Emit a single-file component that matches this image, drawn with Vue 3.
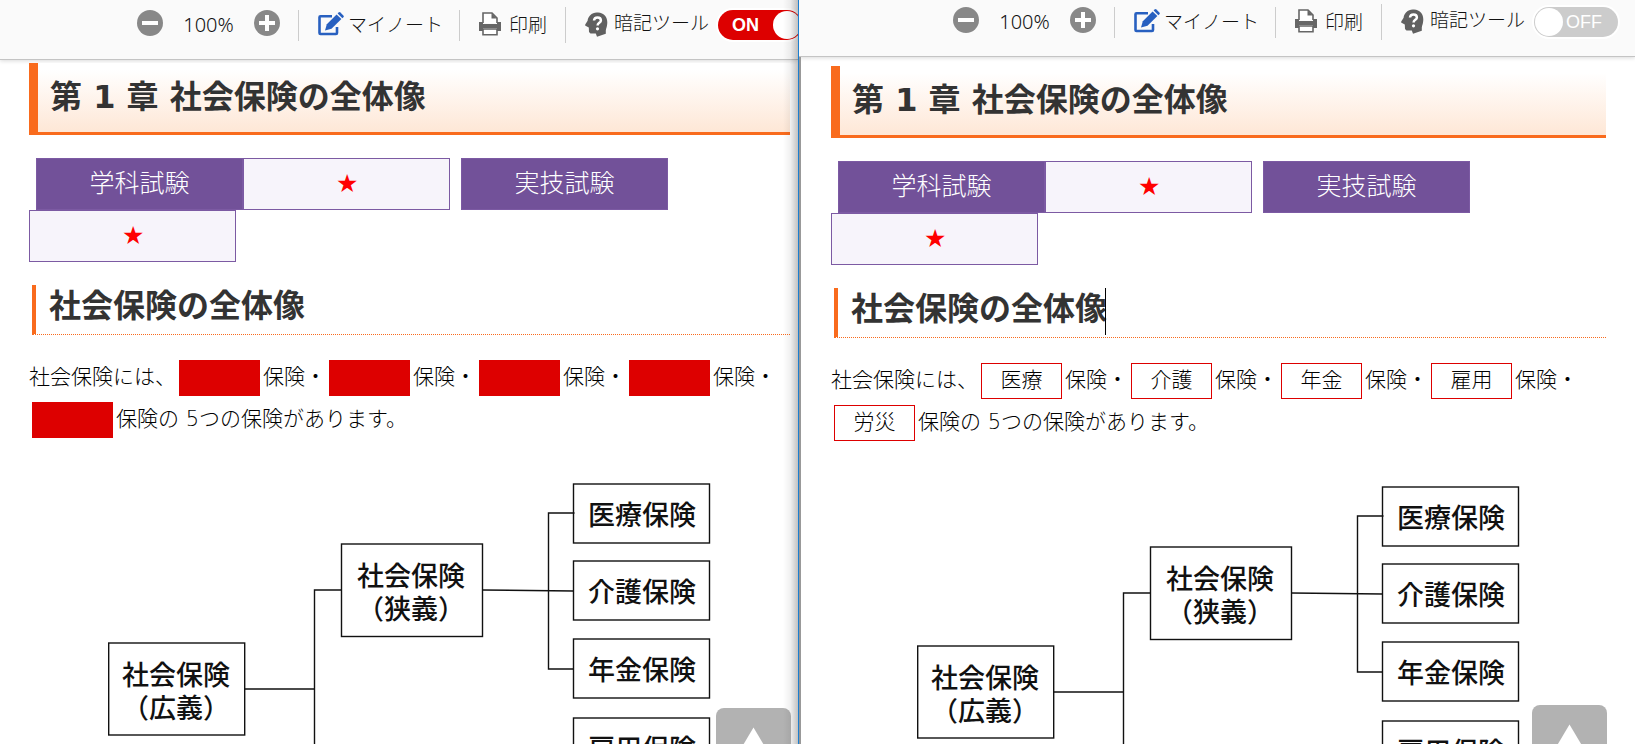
<script setup>
import { ref } from 'vue'

const panes = ref([
  { id: 'left', hidden: true },
  { id: 'right', hidden: false },
])
const answers = ['医療', '介護', '年金', '雇用']
const branches = [
  { name: '医療保険', y: 3 },
  { name: '介護保険', y: 80 },
  { name: '年金保険', y: 158 },
  { name: '雇用保険', y: 237 },
]
</script>

<template>
  <main class="screen">
    <section v-for="pane in panes" :key="pane.id" class="pane" :class="pane.id">
      <header class="toolbar">
        <button class="zoom-btn" type="button" aria-label="縮小">
          <svg width="26" height="26" viewBox="0 0 26 26"><circle cx="13" cy="13" r="13" fill="#888" /><path d="M5 11h16v4H5z" fill="#fff" /></svg>
        </button>
        <span class="zoom-value">100%</span>
        <button class="zoom-btn" type="button" aria-label="拡大">
          <svg width="26" height="26" viewBox="0 0 26 26"><circle cx="13" cy="13" r="13" fill="#888" /><path d="M5 11h6V5h4v6h6v4h-6v6h-4v-6H5z" fill="#fff" /></svg>
        </button>
        <a class="tool note" href="#note">
          <svg width="26" height="24" viewBox="0 0 26 24">
            <path d="M14 4.300H2.500a1 1 0 0 0-1 1V21a1 1 0 0 0 1 1H18a1 1 0 0 0 1-1v-6" fill="none" stroke="#2860c0" stroke-width="2.600" />
            <path d="M7 18.500l1.800-6.300L18.600 2.400l4.800 4.700-9.900 9.700z" fill="#2860c0" />
            <path d="M19.600 1.500l1-1q.9-.8 1.800 0l3 3q.8.900 0 1.800l-1 1z" fill="#2860c0" />
          </svg>
          <span>マイノート</span>
        </a>
        <button class="tool print" type="button">
          <svg width="22" height="24" viewBox="0 0 22 24">
            <path d="M0 10h4v3h14v-3h4v9h-4v-3H4v3H0z" fill="#666" />
            <path d="M4 11V1h9l5 5v5" fill="#fff" stroke="#666" stroke-width="1.600" />
            <path d="M12.500 1v5.500H18z" fill="#666" />
            <path d="M2 12h18v4H2z" fill="#666" />
            <path d="M4 17h14v5.800H4z" fill="#fff" stroke="#666" stroke-width="1.600" />
          </svg>
          <span>印刷</span>
        </button>
        <div class="tool memo">
          <svg width="23" height="25" viewBox="0 0 23 25">
            <path d="M5 3.500C7.500 1 10 .3 13 .6c2.800 0 5.500 1.200 7.300 3.400 1.700 2.300 2.200 5 1.900 8-.2 3-1.200 4.500-1.400 6.500v3.200L12 24.800l-1.200-3.300H5.500L4 20l-.2-4.500-3.300-1.700q-.7-.6-.1-1.500l2.200-3.500C2.800 6.700 3.500 5 5 3.500z" fill="#606060" />
            <path d="M9 8.500C9.200 6.300 10.500 5.400 12.500 5.400s3.400 1.200 3.400 3c0 2.400-3.300 2.500-3.300 5" fill="none" stroke="#fff" stroke-width="2.500" />
            <circle cx="12.500" cy="16.800" r="1.600" fill="#fff" />
          </svg>
          <label :for="'switch-' + pane.id">暗記ツール</label>
        </div>
        <button
          :id="'switch-' + pane.id"
          class="switch"
          :class="{ on: pane.hidden }"
          type="button"
          role="switch"
          :aria-checked="pane.hidden"
          @click="pane.hidden = !pane.hidden"
        >
          <span class="knob"></span><span class="state">{{ pane.hidden ? 'ON' : 'OFF' }}</span>
        </button>
      </header>

      <article class="content">
        <h1>第 1 章 社会保険の全体像</h1>
        <div class="exams">
          <span class="exam">学科試験</span><span class="rank">★</span>
          <span class="exam">実技試験</span><span class="rank">★</span>
        </div>
        <h2>社会保険の全体像<span v-if="pane.id === 'right'" class="caret"></span></h2>
        <p>社会保険には、<template v-for="word in answers" :key="word"><span class="blank" :class="{ masked: pane.hidden }">{{ pane.hidden ? '' : word }}</span>保険・</template><span class="blank" :class="{ masked: pane.hidden }">{{ pane.hidden ? '' : '労災' }}</span>保険の 5つの保険があります。</p>
        <svg class="diagram" width="603" height="310" viewBox="0 0 603 310" role="img" aria-label="社会保険の体系図">
          <g fill="none" stroke="#111" stroke-width="1.400">
            <rect x="0.700" y="162" width="136" height="92" />
            <rect x="233.500" y="63" width="141" height="92.500" />
            <path d="M136.500 208H206.500M206.500 310V109H233.500M374.500 109L465.500 110M466.500 32H440.500V188H465.500" />
            <rect v-for="b in branches" :key="b.name" x="465.500" :y="b.y" width="136" height="59" />
          </g>
          <g class="names">
            <text x="68" y="204">社会保険</text>
            <text x="68" y="237">（広義）</text>
            <text x="303" y="105">社会保険</text>
            <text x="303" y="138">（狭義）</text>
            <text v-for="b in branches" :key="b.name" x="534" :y="b.y + 41">{{ b.name }}</text>
          </g>
        </svg>
      </article>

      <button class="to-top" type="button" aria-label="ページの先頭へ">
        <svg width="75" height="75" viewBox="0 0 75 75"><path d="M37.500 19.500L58 54H17z" fill="#fff" /></svg>
      </button>
    </section>
  </main>
</template>

<style>
body {
  margin: 0;
  overflow: hidden;
}
</style>

<style scoped>
.screen {
  display: grid;
  grid-template-columns: 799fr 836fr;
  height: 100vh;
  overflow: hidden;
  background: #fff;
  color: #000;
  font-family: "Noto Sans", "Noto Sans CJK JP", sans-serif;
  font-weight: 300;
}
.pane {
  position: relative;
  min-width: 0;
  overflow: hidden;
  display: flex;
  flex-direction: column;
}
.left {
  border-right: 1px solid #1c7fd0;
}
.left::after {
  content: "";
  position: absolute;
  top: 0;
  right: 0;
  bottom: 0;
  width: 15px;
  background: linear-gradient(to right, rgba(0, 0, 0, 0), rgba(0, 0, 0, 0.06) 50%, rgba(0, 0, 0, 0.24));
  pointer-events: none;
}
button {
  border: 0;
  padding: 0;
  background: none;
  color: inherit;
  font: inherit;
  cursor: pointer;
}
svg {
  display: block;
  flex: none;
}
.toolbar {
  display: flex;
  align-items: flex-start;
  flex: none;
  box-sizing: border-box;
  height: 60px;
  padding: 10px 0 0 137px;
  border-bottom: 1px solid #c4c4c4;
  background: #fafafa;
  box-shadow: 0 1px 4px rgba(0, 0, 0, 0.15);
  font-size: 19px;
  line-height: 30px;
  color: #111;
}
.right .toolbar {
  height: 57px;
  padding: 7px 0 0 154px;
}
.toolbar > * {
  flex: none;
}
.zoom-value {
  width: 91px;
  text-align: center;
  font-size: 20px;
}
.tool {
  display: flex;
  align-items: flex-start;
  box-sizing: border-box;
  height: 31px;
  border-left: 1px solid #ccc;
  color: inherit;
  text-decoration: none;
}
.tool svg {
  margin-top: 2px;
}
.note {
  width: 161px;
  margin-left: 18px;
  padding-left: 19px;
  gap: 4px;
}
.print {
  width: 106px;
  padding-left: 19px;
  gap: 8px;
}
.memo {
  width: 152px;
  height: 36px;
  margin-top: -3px;
  padding-left: 19px;
  gap: 6px;
}
.memo svg {
  margin-top: 5px;
}
.memo label {
  line-height: 32px;
}
.switch {
  position: relative;
  width: 84px;
  height: 30px;
  margin-left: 1px;
  border-radius: 15px;
  background: #ccc;
  box-shadow: 0 0 0 2px #fff;
  color: #fff;
  font-family: "Liberation Sans", Arial, sans-serif;
  font-size: 18px;
  font-weight: 400;
  line-height: 31px;
  text-align: left;
}
.state {
  padding-left: 32px;
}
.knob {
  position: absolute;
  top: 1px;
  left: 1px;
  width: 28px;
  height: 28px;
  border-radius: 50%;
  background: #fff;
}
.switch.on {
  background: #d00;
}
.on .knob {
  left: 55px;
}
.on .state {
  padding-left: 14px;
  font-weight: 700;
}
.content {
  flex: 1;
  padding: 3px 8px 0 29px;
}
.right .content {
  padding: 9px 29px 0 30px;
  border-left: 2px solid #999;
}
h1,
h2 {
  margin: 0;
  color: #333;
  font-family: "DejaVu Sans", "Noto Sans CJK JP", sans-serif;
  font-size: 32px;
  font-weight: 700;
}
h1 {
  padding-left: 12px;
  border-left: 9px solid #f96b1d;
  border-bottom: 3px solid #f96b1d;
  background: linear-gradient(#fff 10%, #fee7d6);
  line-height: 69px;
}
.exams {
  display: flex;
  flex-wrap: wrap;
  margin-top: 23px;
}
.exam,
.rank {
  box-sizing: border-box;
  width: 207px;
  height: 52px;
  border: 1px solid #7c5aa3;
  font-size: 25px;
  text-align: center;
}
.exam {
  margin-left: 7px;
  background: #725199;
  color: #fff;
  line-height: 46px;
}
.rank {
  margin-right: 4px;
  background: #f7f4fb;
  color: #f00;
  font-family: "DejaVu Sans", sans-serif;
  line-height: 50px;
}
h2 {
  display: flex;
  height: 49px;
  margin: 23px 0 0 3px;
  padding-left: 13px;
  border-left: 4px solid #f96b1d;
  border-bottom: 1px dotted #f96b1d;
  line-height: 42px;
}
.caret {
  width: 1px;
  height: 47px;
  margin-left: -2px;
  background: #000;
}
p {
  margin: 21px 0 0;
  font-family: "DejaVu Sans", "Noto Sans CJK JP", sans-serif;
  font-size: 21px;
  line-height: 42px;
}
.blank {
  display: inline-block;
  box-sizing: border-box;
  width: 81px;
  height: 36px;
  margin: 0 3px;
  border: 1px solid #d00;
  line-height: 32px;
  text-align: center;
  vertical-align: middle;
}
.masked {
  background: #d00;
}
.diagram {
  margin: 41px auto 0;
}
.names {
  fill: #111;
  font-family: "Noto Sans CJK JP", sans-serif;
  font-size: 27px;
  font-weight: 500;
  text-anchor: middle;
}
.to-top {
  position: absolute;
  right: 7px;
  bottom: -39px;
  border-radius: 8px;
  background: #b2b2b2;
}
.right .to-top {
  right: 28px;
  bottom: -36px;
}
</style>
